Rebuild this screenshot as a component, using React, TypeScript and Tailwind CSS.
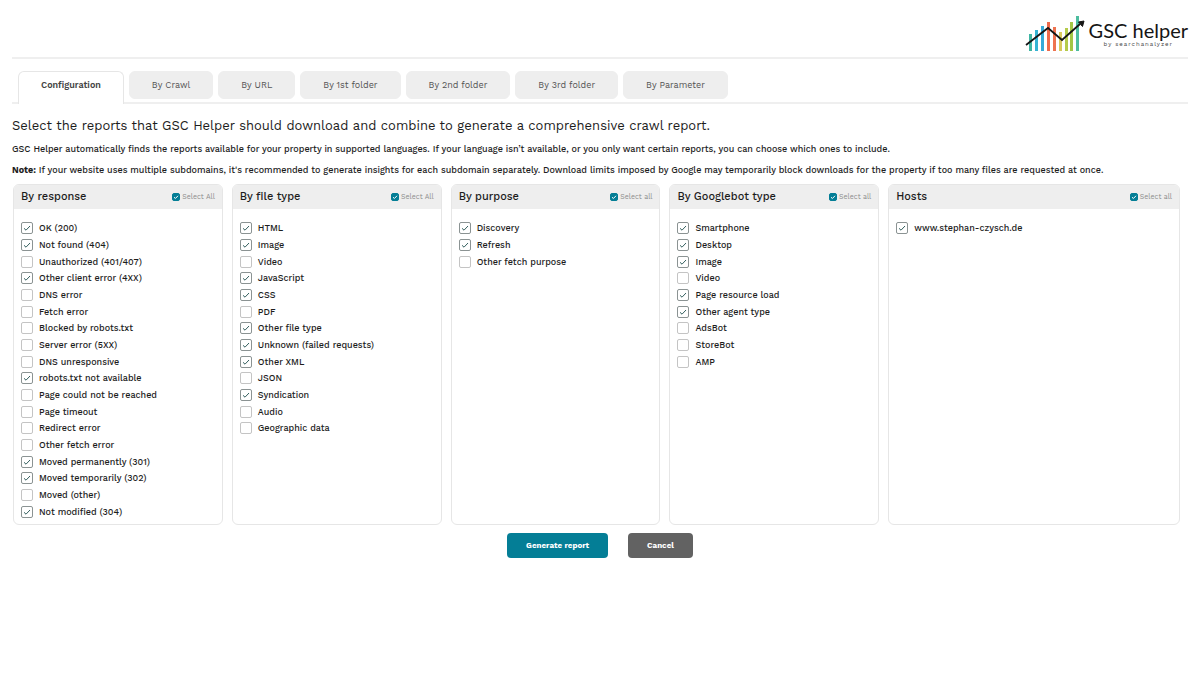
import { useState } from "react";
import clsx from "clsx";

type Option = { label: string; on?: boolean };
type Group = { title: string; selectLabel: string; options: Option[] };

const tabs = [
  "Configuration",
  "By Crawl",
  "By URL",
  "By 1st folder",
  "By 2nd folder",
  "By 3rd folder",
  "By Parameter",
];

const groups: Group[] = [
  {
    title: "By response",
    selectLabel: "Select All",
    options: [
      { label: "OK (200)", on: true },
      { label: "Not found (404)", on: true },
      { label: "Unauthorized (401/407)" },
      { label: "Other client error (4XX)", on: true },
      { label: "DNS error" },
      { label: "Fetch error" },
      { label: "Blocked by robots.txt" },
      { label: "Server error (5XX)" },
      { label: "DNS unresponsive" },
      { label: "robots.txt not available", on: true },
      { label: "Page could not be reached" },
      { label: "Page timeout" },
      { label: "Redirect error" },
      { label: "Other fetch error" },
      { label: "Moved permanently (301)", on: true },
      { label: "Moved temporarily (302)", on: true },
      { label: "Moved (other)" },
      { label: "Not modified (304)", on: true },
    ],
  },
  {
    title: "By file type",
    selectLabel: "Select All",
    options: [
      { label: "HTML", on: true },
      { label: "Image", on: true },
      { label: "Video" },
      { label: "JavaScript", on: true },
      { label: "CSS", on: true },
      { label: "PDF" },
      { label: "Other file type", on: true },
      { label: "Unknown (failed requests)", on: true },
      { label: "Other XML", on: true },
      { label: "JSON" },
      { label: "Syndication", on: true },
      { label: "Audio" },
      { label: "Geographic data" },
    ],
  },
  {
    title: "By purpose",
    selectLabel: "Select all",
    options: [
      { label: "Discovery", on: true },
      { label: "Refresh", on: true },
      { label: "Other fetch purpose" },
    ],
  },
  {
    title: "By Googlebot type",
    selectLabel: "Select all",
    options: [
      { label: "Smartphone", on: true },
      { label: "Desktop", on: true },
      { label: "Image", on: true },
      { label: "Video" },
      { label: "Page resource load", on: true },
      { label: "Other agent type", on: true },
      { label: "AdsBot" },
      { label: "StoreBot" },
      { label: "AMP" },
    ],
  },
  {
    title: "Hosts",
    selectLabel: "Select all",
    options: [{ label: "www.stephan-czysch.de", on: true }],
  },
];

const bars = [
  { x: 4, y: 18, color: "#3fb5a3" },
  { x: 10, y: 14, color: "#35b3d3" },
  { x: 16, y: 10, color: "#35a9d8" },
  { x: 22, y: 6, color: "#ee6a4b" },
  { x: 28, y: 11, color: "#ee7350" },
  { x: 34, y: 16, color: "#d9c95c" },
  { x: 40, y: 12, color: "#b5cb4c" },
  { x: 45, y: 6, color: "#a3c644" },
  { x: 51, y: 0, color: "#4dbd9f" },
];

function Logo() {
  return (
    <a className="flex items-center gap-1" href="#home" aria-label="GSC helper by searchanalyzer">
      <svg className="h-9 w-15" viewBox="0 0 60 36" fill="none" aria-hidden="true">
        {bars.map((bar) => (
          <rect key={bar.x} x={bar.x} y={bar.y} width="3" height={35 - bar.y} fill={bar.color} />
        ))}
        <path d="M1 29 23 12 37 24 55 8" stroke="#151515" strokeWidth="1.8" />
        <path d="M59 5 57.5 10.5 53.5 6Z" fill="#151515" stroke="#151515" />
      </svg>
      <span className="flex flex-col items-center">
        <span className="font-[Lato] text-[20px] leading-5 text-[#151515]">GSC helper</span>
        <span className="text-[6px] leading-2 tracking-[1px] text-[#444]">by searchanalyzer</span>
      </span>
    </a>
  );
}

type CheckProps = { label: string; checked: boolean; onChange: () => void };

function OptionCheck({ label, checked, onChange }: CheckProps) {
  return (
    <label className="flex items-center gap-1.5 text-[9px] leading-3 font-medium text-[#1d1d1d]">
      <span className="grid size-3 shrink-0">
        <input
          className="col-start-1 row-start-1 size-3 appearance-none rounded-xs border border-[#c4c4c4] bg-white checked:border-[#8b9393]"
          checked={checked}
          onChange={onChange}
          type="checkbox"
        />
        {checked ? (
          <svg
            className="pointer-events-none col-start-1 row-start-1 size-3"
            viewBox="0 0 12 12"
            fill="none"
            stroke="#35605f"
          >
            <path d="M3 6.3 5 8.2 9 4" />
          </svg>
        ) : null}
      </span>
      {label}
    </label>
  );
}

function SelectAll({ label, checked, onChange }: CheckProps) {
  return (
    <label className="flex items-center gap-0.5 text-[7px] leading-3 text-[#8c8c8c]">
      <span className="grid size-2 shrink-0">
        <input
          className="col-start-1 row-start-1 size-2 appearance-none rounded-xs border border-[#9a9a9a] bg-white checked:border-[#047e96] checked:bg-[#047e96]"
          checked={checked}
          onChange={onChange}
          type="checkbox"
        />
        {checked ? (
          <svg
            className="pointer-events-none col-start-1 row-start-1 size-2"
            viewBox="0 0 8 8"
            fill="none"
            stroke="#fff"
          >
            <path d="M2 4.2 3.4 5.5 6 2.8" />
          </svg>
        ) : null}
      </span>
      {label}
    </label>
  );
}

function GroupCard({ group }: { group: Group }) {
  const [values, setValues] = useState(group.options.map((option) => Boolean(option.on)));
  const [all, setAll] = useState(true);

  const toggleAll = () => {
    setValues(values.map(() => !all));
    setAll(!all);
  };

  return (
    <section className="overflow-hidden rounded-md border border-[#e6e6e6]">
      <div className="flex h-6 items-center justify-between bg-[#eee] px-[7px]">
        <h2 className="text-[11px] leading-4 font-medium text-[#1d1d1d]">{group.title}</h2>
        <SelectAll label={group.selectLabel} checked={all} onChange={toggleAll} />
      </div>
      <div className="mt-[11px] mb-1 grid h-75 grid-rows-[repeat(18,1fr)] px-[7px]">
        {group.options.map((option, index) => (
          <OptionCheck
            key={option.label}
            label={option.label}
            checked={values[index]}
            onChange={() => setValues(values.map((value, i) => (i === index ? !value : value)))}
          />
        ))}
      </div>
    </section>
  );
}

export default function App() {
  const [activeTab, setActiveTab] = useState(tabs[0]);

  return (
    <div className="min-h-screen bg-white px-3 font-['Work_Sans',Inter,sans-serif] text-[#1d1d1d]">
      <header className="flex justify-end border-b-2 border-[#efefef] pt-4 pb-[5px]">
        <Logo />
      </header>

      <nav
        className="mt-3 flex items-start gap-[5px] border-b-2 border-[#efefef] pl-1.5"
        aria-label="Reports"
        role="tablist"
      >
        {tabs.map((tab) => (
          <button
            aria-selected={tab === activeTab}
            className={clsx(
              "flex items-start rounded-t-md border px-[22px] text-[9px] leading-[26px]",
              tab === activeTab
                ? "-mb-0.5 h-[33px] border-b-0 border-[#e6e6e6] bg-white font-semibold text-[#444]"
                : "h-7 rounded-b-md border-[#eee] bg-[#eee] text-[#555]",
            )}
            key={tab}
            onClick={() => setActiveTab(tab)}
            role="tab"
            type="button"
          >
            {tab}
          </button>
        ))}
      </nav>

      <main>
        <h1 className="mt-3 text-[13px] leading-5 font-normal">
          Select the reports that GSC Helper should download and combine to generate a comprehensive
          crawl report.
        </h1>
        <p className="mt-[5px] text-[9px] leading-4 font-medium">
          GSC Helper automatically finds the reports available for your property in supported
          languages. If your language isn’t available, or you only want certain reports, you can
          choose which ones to include.
        </p>
        <p className="mt-[5px] text-[9px] leading-4 font-medium">
          <strong className="font-bold">Note:</strong> If your website uses multiple subdomains, it's
          recommended to generate insights for each subdomain separately. Download limits imposed by
          Google may temporarily block downloads for the property if too many files are requested at
          once.
        </p>

        <form onSubmit={(event) => event.preventDefault()}>
          <div className="mt-1.5 mr-2 ml-px grid grid-cols-[210fr_210fr_210fr_210fr_292fr] gap-[9px]">
            {groups.map((group) => (
              <GroupCard group={group} key={group.title} />
            ))}
          </div>
          <div className="mt-2 flex justify-center gap-5">
            <button
              className="h-[25px] rounded-[4px] bg-[#047e96] px-[19px] text-[8px] font-bold text-white"
              type="submit"
            >
              Generate report
            </button>
            <button
              className="h-[25px] rounded-[4px] bg-[#626262] px-[19px] text-[8px] font-bold text-white"
              type="button"
            >
              Cancel
            </button>
          </div>
        </form>
      </main>
    </div>
  );
}
